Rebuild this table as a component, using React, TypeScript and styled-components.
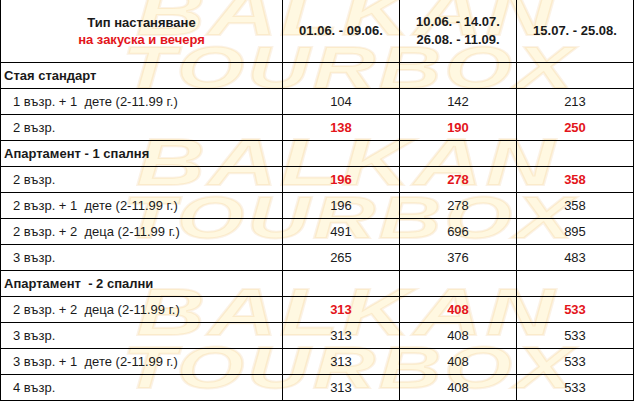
import styled, { createGlobalStyle } from "styled-components";

const GlobalStyle = createGlobalStyle`
  html, body {
    margin: 0;
    padding: 0;
    background: #ffffff;
  }
  body {
    font-family: "Liberation Sans", Arial, sans-serif;
    color: #1a1a1a;
  }
`;

const Page = styled.div`
  position: relative;
  width: 634px;
  height: 402px;
  overflow: hidden;
`;

// faint "BALKAN TOURBOX" logo tiled behind the table
const Watermark = styled.div`
  position: absolute;
  inset: 0;
  overflow: hidden;
  pointer-events: none;
`;

const Logo = styled.div<{ top: number }>`
  position: absolute;
  left: 112px;
  top: ${(p) => p.top}px;
  display: flex;
  flex-direction: column;
  font-family: "Liberation Sans", Arial, sans-serif;
  font-weight: 900;
  font-style: italic;
  color: rgba(252, 214, 70, 0.16);
  -webkit-text-stroke: 2px rgba(226, 150, 50, 0.12);
  line-height: 56px;
`;

const LogoLine = styled.span<{ size: number; shift: number }>`
  font-size: ${(p) => p.size}px;
  letter-spacing: 2px;
  margin-left: ${(p) => p.shift}px;
  transform: scaleX(1.45);
  transform-origin: left center;
  white-space: nowrap;
`;

const Table = styled.table`
  position: relative;
  border-collapse: separate;
  border-spacing: 0;
  table-layout: fixed;
  width: 634px;
  font-size: 13px;
`;

const Col = styled.col<{ w: number }>`
  width: ${(p) => p.w}px;
`;

const HeadCell = styled.th`
  height: 62px;
  padding: 0;
  border-right: 1px solid #000;
  border-bottom: 1px solid #000;
  font-weight: bold;
  text-align: center;
  vertical-align: middle;
  line-height: 18px;
  &:first-child {
    border-left: 1px solid #000;
    line-height: 17px;
  }
`;

const RedText = styled.span`
  color: #e3151b;
`;

const Cell = styled.td<{ bold?: boolean; red?: boolean; indent?: number }>`
  height: 25px;
  padding: 0 0 0 ${(p) => p.indent ?? 0}px;
  border-right: 1px solid #000;
  border-bottom: 1px solid #000;
  vertical-align: middle;
  text-align: ${(p) => (p.indent !== undefined ? "left" : "center")};
  font-weight: ${(p) => (p.bold ? "bold" : "normal")};
  color: ${(p) => (p.red ? "#e3151b" : "#1a1a1a")};
  white-space: pre;
  &:first-child {
    border-left: 1px solid #000;
  }
`;

type Row =
  | { kind: "group"; title: string }
  | { kind: "price"; label: string; prices: number[]; red?: boolean };

const rows: Row[] = [
  { kind: "group", title: "Стая стандарт" },
  { kind: "price", label: "1 възр. + 1  дете (2-11.99 г.)", prices: [104, 142, 213] },
  { kind: "price", label: "2 възр.", prices: [138, 190, 250], red: true },
  { kind: "group", title: "Апартамент - 1 спалня" },
  { kind: "price", label: "2 възр.", prices: [196, 278, 358], red: true },
  { kind: "price", label: "2 възр. + 1  дете (2-11.99 г.)", prices: [196, 278, 358] },
  { kind: "price", label: "2 възр. + 2  деца (2-11.99 г.)", prices: [491, 696, 895] },
  { kind: "price", label: "3 възр.", prices: [265, 376, 483] },
  { kind: "group", title: "Апартамент  - 2 спални" },
  { kind: "price", label: "2 възр. + 2  деца (2-11.99 г.)", prices: [313, 408, 533], red: true },
  { kind: "price", label: "3 възр.", prices: [313, 408, 533] },
  { kind: "price", label: "3 възр. + 1  дете (2-11.99 г.)", prices: [313, 408, 533] },
  { kind: "price", label: "4 възр.", prices: [313, 408, 533] },
];

const logoTops = [-16, 134, 284];

const App = () => {
  return (
    <>
      <GlobalStyle />
      <Page>
        <Watermark>
          {logoTops.map((top) => (
            <Logo key={top} top={top}>
              <LogoLine size={66} shift={24}>
                BALKAN
              </LogoLine>
              <LogoLine size={60} shift={10}>
                TOURBOX
              </LogoLine>
            </Logo>
          ))}
        </Watermark>
        <Table>
          <colgroup>
            <Col w={283} />
            <Col w={117} />
            <Col w={117} />
            <Col w={117} />
          </colgroup>
          <thead>
            <tr>
              <HeadCell>
                Тип настаняване
                <br />
                <RedText>на закуска и вечеря</RedText>
              </HeadCell>
              <HeadCell>01.06. - 09.06.</HeadCell>
              <HeadCell>
                10.06. - 14.07.
                <br />
                26.08. - 11.09.
              </HeadCell>
              <HeadCell>15.07. - 25.08.</HeadCell>
            </tr>
          </thead>
          <tbody>
            {rows.map((row, i) =>
              row.kind === "group" ? (
                <tr key={i}>
                  <Cell bold indent={3}>
                    {row.title}
                  </Cell>
                  <Cell />
                  <Cell />
                  <Cell />
                </tr>
              ) : (
                <tr key={i}>
                  <Cell indent={12}>{row.label}</Cell>
                  {row.prices.map((price, j) => (
                    <Cell key={j} bold={row.red} red={row.red}>
                      {price}
                    </Cell>
                  ))}
                </tr>
              )
            )}
          </tbody>
        </Table>
      </Page>
    </>
  );
};

export default App;
